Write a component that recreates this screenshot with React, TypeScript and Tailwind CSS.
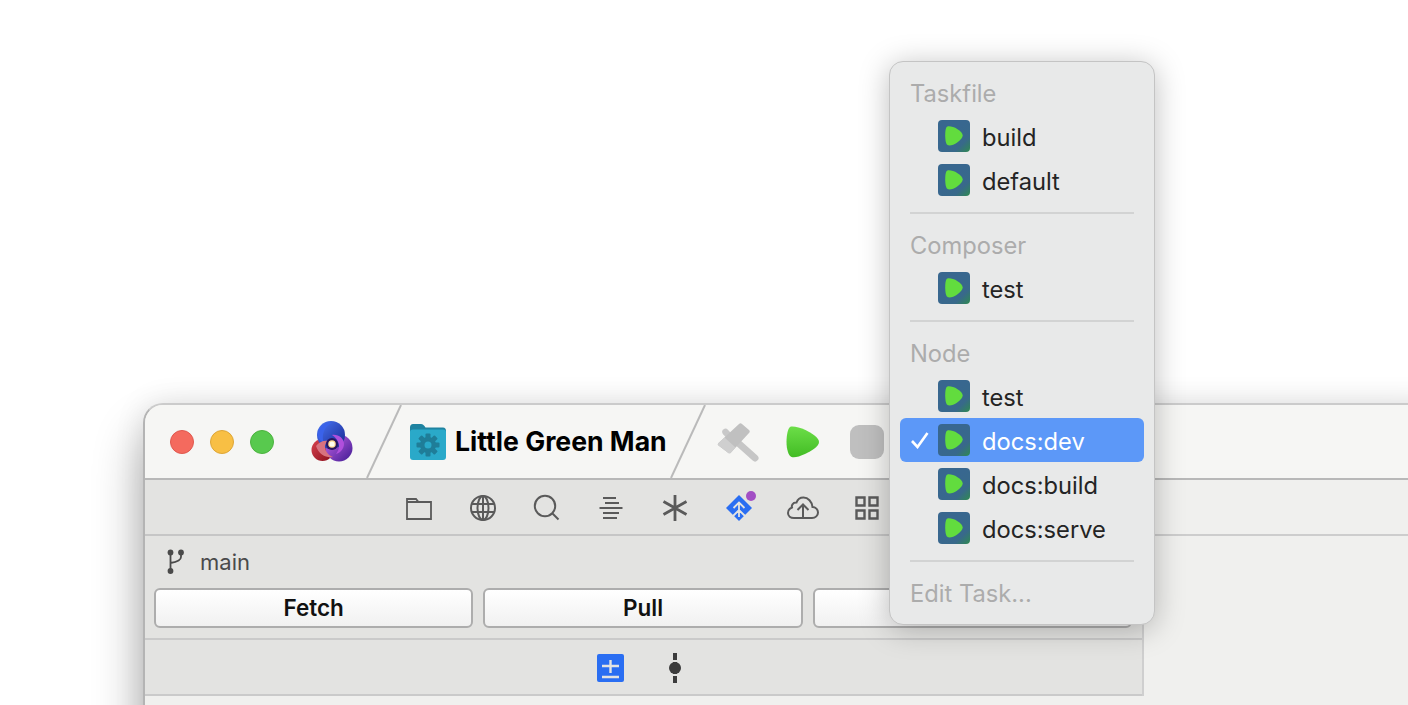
const FONT = "font-['Inter','Noto_Sans',sans-serif]";

function TaskIcon() {
  return (
    <svg width="32" height="32" viewBox="0 0 32 32" className="shrink-0">
      <defs>
        <linearGradient id="tile" x1="0.45" y1="0.45" x2="1" y2="1">
          <stop offset="0" stopColor="#38678f" />
          <stop offset="0.55" stopColor="#38698a" />
          <stop offset="1" stopColor="#2f8a50" />
        </linearGradient>
      </defs>
      <rect width="32" height="32" rx="4" fill="url(#tile)" />
      <path d="M9.5 6.5C12 6 16 7 19.5 9.2C22 10.8 24.7 13 24.7 15.5C24.7 18 22 20.3 19.5 22.2C16 24.8 12.5 25.8 10 25.3C8 24.8 7.2 20 7.2 15.8C7.2 11.5 7.6 7 9.5 6.5Z" fill="#62dc3e" />
    </svg>
  );
}

function MenuRow({ label, checked }: { label: string; checked?: boolean }) {
  return (
    <div className={`flex h-11 items-center rounded-md pl-[38px] text-[23.7px] ${checked ? "bg-[#5c98f8] text-white" : "text-[#242424]"}`}>
      <div className="relative flex items-center">
        {checked && (
          <svg width="20" height="18" viewBox="0 0 20 18" className="absolute left-[-28px] top-[7px]">
            <path d="M2 10L7.5 16L17.5 2" fill="none" stroke="#fff" strokeWidth="2.6" />
          </svg>
        )}
        <TaskIcon />
      </div>
      <span className="ml-3 mt-1 leading-none">{label}</span>
    </div>
  );
}

function MenuHeading({ label }: { label: string }) {
  return <div className="flex h-11 items-center pl-[10px] pt-1 text-[23.7px] text-[#acacac]">{label}</div>;
}

function MenuDivider() {
  return <div className="mx-[10px] mb-2 mt-2.5 h-0.5 bg-[#d2d3d3]" />;
}

function Slash() {
  return (
    <svg width="36" height="73" viewBox="0 0 36 73" className="shrink-0">
      <line x1="35" y1="0" x2="1" y2="73" stroke="#bababa" strokeWidth="2" />
    </svg>
  );
}

function AppLogo() {
  return (
    <svg width="42" height="42" viewBox="0 0 42 42" className="shrink-0">
      <defs>
        <linearGradient id="logoBlue" x1="0" y1="0" x2="1" y2="1">
          <stop offset="0" stopColor="#4a78f5" />
          <stop offset="1" stopColor="#17248e" />
        </linearGradient>
        <linearGradient id="logoRed" x1="0" y1="0" x2="1" y2="1">
          <stop offset="0" stopColor="#d8434f" />
          <stop offset="1" stopColor="#8a0f1c" />
        </linearGradient>
        <linearGradient id="logoPurple" x1="0" y1="0" x2="1" y2="1">
          <stop offset="0" stopColor="#c866ea" />
          <stop offset="1" stopColor="#3f1a92" />
        </linearGradient>
      </defs>
      <circle cx="11.5" cy="29" r="11" fill="url(#logoRed)" />
      <circle cx="28" cy="27" r="13.5" fill="url(#logoPurple)" />
      <circle cx="20" cy="14" r="14" fill="url(#logoBlue)" />
      <path d="M7 11C9 5 15 1 21 2C16 4 13 8 12 14C11.5 17 12 20 13 22C9 20 6 16 7 11Z" fill="#3a62ea" />
      <path d="M5 25C8 21 13 19 17 20C14 22 13 26 15 30C16.5 33 19 35 22 36C15 37 8 34 5 25Z" fill="#d8727f" />
      <path d="M21 14C27 13 33 17 33 23C33 28 29 32 25 33C28 29 29 25 27 21C26 18 24 16 21 14Z" fill="#b04fdc" />
      <circle cx="21" cy="23" r="6" fill="#2a1560" />
      <circle cx="21" cy="23" r="3.8" fill="#ffd98a" />
      <circle cx="21" cy="23" r="2.6" fill="#fffdf2" />
    </svg>
  );
}

function FolderIcon() {
  return (
    <svg width="36" height="36" viewBox="0 0 36 36" className="shrink-0">
      <path d="M0 3.5C0 1.5 1.2 0 3 0H11C13 0 14 1.5 15.5 3.5H33C35 3.5 36 5 36 7V12H0Z" fill="#1f83a0" />
      <path d="M0 8C0 6.5 1 5.5 3 5.5H33C35 5.5 36 6.5 36 8V33C36 35 35 36 33 36H3C1 36 0 35 0 33Z" fill="#2aa9c9" />
      <g fill="#1f7d98">
        <circle cx="18" cy="21" r="8" />
        <rect x="15.5" y="9.5" width="5" height="23" rx="1" />
        <rect x="15.5" y="9.5" width="5" height="23" rx="1" transform="rotate(45 18 21)" />
        <rect x="15.5" y="9.5" width="5" height="23" rx="1" transform="rotate(90 18 21)" />
        <rect x="15.5" y="9.5" width="5" height="23" rx="1" transform="rotate(135 18 21)" />
      </g>
      <circle cx="18" cy="21" r="3.5" fill="#2aa9c9" />
    </svg>
  );
}

function HammerIcon() {
  return (
    <svg width="44" height="42" viewBox="0 0 44 42" className="shrink-0">
      <path d="M20 20L39 37" stroke="#c6c6c6" strokeWidth="7" strokeLinecap="round" />
      <path d="M15 17L9.5 11" stroke="#c8c8c8" strokeWidth="6.5" strokeLinecap="round" />
      <path d="M2.5 22L23 3C24 2 25 2 26 3L33 9C34 10 34 11 33 12L15 31.5C14 32.6 13 32.6 12 31.8L2.5 24.5C1.5 23.8 1.5 23 2.5 22Z" fill="#c0c0c0" />
      <path d="M2.5 22L8.5 16.5L19.5 26.5L15 31.5C14 32.6 13 32.6 12 31.8L2.5 24.5C1.5 23.8 1.5 23 2.5 22Z" fill="#cfcfcf" />
    </svg>
  );
}

function RunIcon() {
  return (
    <svg width="34" height="32" viewBox="0 0 34 32" className="shrink-0">
      <defs>
        <linearGradient id="run" x1="0" y1="0" x2="0" y2="1">
          <stop offset="0" stopColor="#6cde48" />
          <stop offset="1" stopColor="#42bc24" />
        </linearGradient>
      </defs>
      <path d="M5 0.5C8.5 0 14 1.5 19.5 4C25.5 7 33 11.5 33 16C33 20.5 25.5 25 19 28C13.5 30.5 8.5 32 5.5 31C2.5 30 0.5 23 0.5 16C0.5 9 2 1 5 0.5Z" fill="url(#run)" />
    </svg>
  );
}

function ToolbarIcon({ children }: { children: React.ReactNode }) {
  return (
    <svg width="28" height="28" viewBox="0 0 28 28" fill="none" stroke="#5a5a5a" strokeWidth="2" className="shrink-0">
      {children}
    </svg>
  );
}

function Toolbar() {
  return (
    <div className="flex h-[54px] items-center justify-center gap-9 pr-[2px] pt-px">
      <ToolbarIcon>
        <path d="M2 25V5H11L13.5 8H26V25Z M2 8H13.5" strokeWidth="1.8" />
      </ToolbarIcon>
      <ToolbarIcon>
        <circle cx="14" cy="14" r="12" />
        <ellipse cx="14" cy="14" rx="5.5" ry="12" />
        <path d="M14 2V26M2.5 10H25.5M2.5 18H25.5" />
      </ToolbarIcon>
      <ToolbarIcon>
        <circle cx="12" cy="12" r="10.2" />
        <path d="M19 19L25.5 25.5" />
      </ToolbarIcon>
      <ToolbarIcon>
        <path d="M6 4H19M8 9H22M2.5 14H25.5M6 19H22M6 24H20" strokeWidth="1.8" />
      </ToolbarIcon>
      <ToolbarIcon>
        <path d="M14 1V27M2.5 7.5L25.5 20.5M25.5 7.5L2.5 20.5" strokeWidth="2.8" />
      </ToolbarIcon>
      <div className="relative h-7 w-7 shrink-0">
        <svg width="28" height="28" viewBox="0 0 28 28">
          <path d="M14 1L27 14L14 27L1 14Z" fill="#2a6ef2" />
          <path d="M14 8V23M8.5 14L14 8.5L19.5 14M8 22L14 16L20 22" fill="none" stroke="#e3e3e1" strokeWidth="1.8" />
        </svg>
        <span className="absolute right-[-3px] top-[-3px] h-2.5 w-2.5 rounded-full bg-[#a24fc4]" />
      </div>
      <svg width="32" height="24" viewBox="0 0 32 24" fill="none" stroke="#5a5a5a" strokeWidth="2" className="mx-[-2px] shrink-0">
        <path d="M7 22H25C28.5 22 31 19.5 31 16.5C31 13.5 28.5 11 25.5 11C25 5.5 21 1.5 16.5 1.5C13 1.5 10.5 3.5 9.5 6.5C5 6.5 4.5 10 5 11.5C2.5 12.5 1 14.5 1 17C1 20 3.5 22 7 22Z" />
        <path d="M16 21V9M10.5 14L16 8.5L21.5 14" />
      </svg>
      <ToolbarIcon>
        <path d="M3.5 3.5H11.5V11.5H3.5ZM16.5 3.5H24.5V11.5H16.5ZM3.5 16.5H11.5V24.5H3.5ZM16.5 16.5H24.5V24.5H16.5Z" strokeWidth="2.4" />
      </ToolbarIcon>
    </div>
  );
}

function GitButton({ label }: { label?: string }) {
  return (
    <button className="h-10 flex-1 rounded-md border-2 border-[#adadad] bg-gradient-to-b from-white to-[#f1f1f1] text-[22.5px] font-semibold text-[#111]">
      {label}
    </button>
  );
}

export default function App() {
  return (
    <div className={`relative h-[705px] w-[1408px] overflow-hidden bg-white ${FONT}`}>
      <div className="absolute left-[143px] top-[403px] h-[340px] w-[1300px] overflow-hidden rounded-tl-[20px] border-l-2 border-t-2 border-l-[#b4b4b4] border-t-[#cbcbcb] bg-[#f0f0ee] shadow-[0_0_30px_rgba(0,0,0,0.1),0_30px_50px_rgba(0,0,0,0.32)]">
        <div className="flex h-[75px] items-center border-b-2 border-[#b8b8b8] bg-[#f6f6f4] pl-[25px]">
          <div className="flex gap-4">
            <span className="h-6 w-6 rounded-full border border-[#e0584e] bg-[#f46a5e]" />
            <span className="h-6 w-6 rounded-full border border-[#dea637] bg-[#f8bf44]" />
            <span className="h-6 w-6 rounded-full border border-[#4cb23f] bg-[#58c94e]" />
          </div>
          <div className="ml-[37px]"><AppLogo /></div>
          <div className="ml-[13px]"><Slash /></div>
          <div className="ml-[8px]"><FolderIcon /></div>
          <span className="ml-[9px] w-[211px] whitespace-nowrap text-[26.6px] font-bold leading-none text-black">Little Green Man</span>
          <div className="ml-[4px]"><Slash /></div>
          <div className="ml-[10px]"><HammerIcon /></div>
          <div className="ml-[26px]"><RunIcon /></div>
          <div className="ml-[30px] h-[34px] w-[34px] shrink-0 rounded-[9px] bg-[#bfbfbf]" />
        </div>
        <div className="flex">
          <div className="w-[999px] shrink-0 border-r-2 border-[#cfcfcf] bg-[#e3e3e1]">
            <div className="border-b-2 border-[#c6c6c6]"><Toolbar /></div>
            <div className="flex h-[50px] items-center gap-[15px] pl-[22px] pt-0.5 text-[22px] text-[#4a4a4a]">
              <svg width="18" height="26" viewBox="0 0 18 26" className="shrink-0">
                <circle cx="3.5" cy="3.5" r="2.9" fill="#4a4a4a" />
                <circle cx="14" cy="3.5" r="2.9" fill="#4a4a4a" />
                <circle cx="3.5" cy="22" r="2.9" fill="#4a4a4a" />
                <path d="M3.5 5V20M14 6V8C14 11.5 10 13 3.5 14" fill="none" stroke="#4a4a4a" strokeWidth="1.8" />
              </svg>
              <span>main</span>
            </div>
            <div className="flex gap-[10px] border-b-2 border-[#cacaca] pb-[10px] pl-[9px] pr-[10px] pt-[2px]">
              <GitButton label="Fetch" />
              <GitButton label="Pull" />
              <GitButton />
            </div>
            <div className="flex h-[56px] items-center justify-center gap-[44px] border-b-2 border-[#cacaca] pr-[8px] pt-px">
              <div className="flex h-7 w-[27px] flex-col items-center justify-center rounded-[2px] bg-[#2a6ef2]">
                <svg width="21" height="22" viewBox="0 0 21 22" stroke="#e3e3e1" strokeWidth="2.4" fill="none">
                  <path d="M10.5 3V16M2 9H19M2 20H19" />
                </svg>
              </div>
              <svg width="14" height="30" viewBox="0 0 14 30" className="shrink-0">
                <rect x="5" y="0" width="4" height="30" fill="#3c3c3c" />
                <rect x="0" y="7" width="14" height="2" fill="#e3e3e1" />
                <rect x="0" y="21" width="14" height="2" fill="#e3e3e1" />
                <circle cx="7" cy="15" r="6" fill="#3c3c3c" />
              </svg>
            </div>
          </div>
          <div className="flex-1">
            <div className="h-[56px] border-b-2 border-[#cdcdcd]" />
          </div>
        </div>
      </div>

      <div className="absolute left-[889px] top-[61px] w-[266px] rounded-[14px] border border-[#c4c4c4] bg-[#e8e9e9] px-[10px] pb-[10px] pt-2 shadow-[0_4px_30px_rgba(0,0,0,0.26)]">
        <MenuHeading label="Taskfile" />
        <MenuRow label="build" />
        <MenuRow label="default" />
        <MenuDivider />
        <MenuHeading label="Composer" />
        <MenuRow label="test" />
        <MenuDivider />
        <MenuHeading label="Node" />
        <MenuRow label="test" />
        <MenuRow label="docs:dev" checked />
        <MenuRow label="docs:build" />
        <MenuRow label="docs:serve" />
        <MenuDivider />
        <MenuHeading label="Edit Task..." />
      </div>
    </div>
  );
}
